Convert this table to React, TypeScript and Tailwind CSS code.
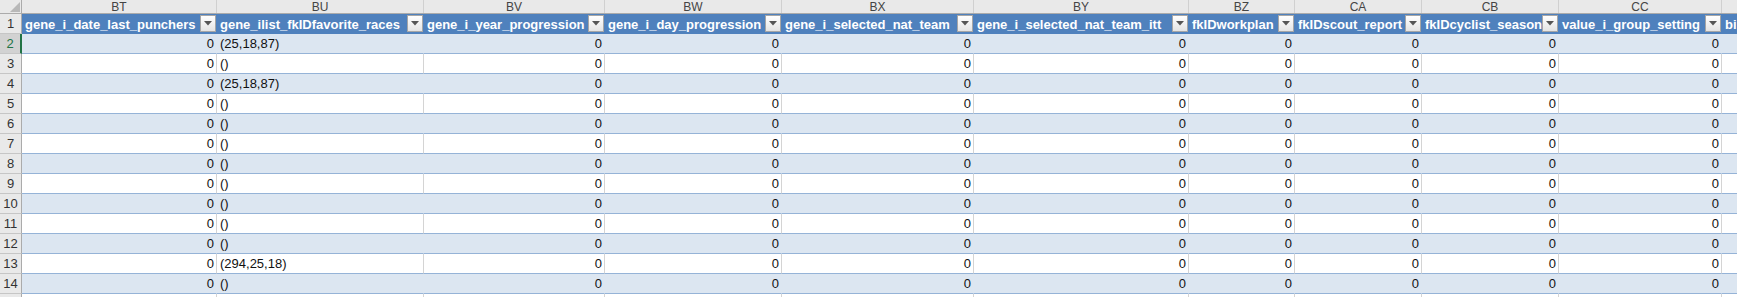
import React from "react";

type Col = { letter: string; w: string; name: string; text?: boolean };

const cols: Col[] = [
  { letter: "BT", w: "w-[195px]", name: "gene_i_date_last_punchers" },
  { letter: "BU", w: "w-[207px]", name: "gene_ilist_fkIDfavorite_races", text: true },
  { letter: "BV", w: "w-[181px]", name: "gene_i_year_progression" },
  { letter: "BW", w: "w-[177px]", name: "gene_i_day_progression" },
  { letter: "BX", w: "w-[192px]", name: "gene_i_selected_nat_team" },
  { letter: "BY", w: "w-[215px]", name: "gene_i_selected_nat_team_itt" },
  { letter: "BZ", w: "w-[106px]", name: "fkIDworkplan" },
  { letter: "CA", w: "w-[127px]", name: "fkIDscout_report" },
  { letter: "CB", w: "w-[137px]", name: "fkIDcyclist_season" },
  { letter: "CC", w: "w-[163px]", name: "value_i_group_setting" },
  { letter: "", w: "w-[140px]", name: "bi" },
];

const races: Record<number, string> = {
  2: "(25,18,87)",
  4: "(25,18,87)",
  13: "(294,25,18)",
};

const rows = Array.from({ length: 14 }, (_, i) => i + 2);

function FilterButton() {
  return (
    <div className="mr-[1px] mt-[1px] flex h-[17px] w-[16px] shrink-0 items-center justify-center border border-[#a6a6a6] bg-gradient-to-b from-[#ffffff] to-[#e4e4e4]">
      <svg width="8" height="5" viewBox="0 0 8 5">
        <polygon points="0,0 8,0 4,4.5" fill="#555555" />
      </svg>
    </div>
  );
}

export default function App() {
  return (
    <div
      className="h-[297px] w-[1737px] overflow-hidden bg-white"
      style={{ fontFamily: '"Liberation Sans", Arial, sans-serif' }}
    >
      <div className="w-max">
        {/* column letters */}
        <div className="flex h-[14px] border-b border-[#ababab] bg-[#e9e9e9]">
          <div className="relative h-full w-[22px] shrink-0 border-r border-[#ababab]">
            <svg className="absolute bottom-[1px] right-[1px]" width="10" height="10" viewBox="0 0 10 10">
              <polygon points="10,0 10,10 0,10" fill="#b8b8b8" />
            </svg>
          </div>
          {cols.map((c, i) => (
            <div
              key={i}
              className={`${c.w} flex h-full shrink-0 items-center justify-center border-r border-[#d0d0d0] text-[12px] leading-none text-[#444444]`}
            >
              {c.letter}
            </div>
          ))}
        </div>

        {/* header row 1 */}
        <div className="flex h-[20px]">
          <div className="flex h-full w-[22px] shrink-0 items-end justify-center border-b border-r border-[#c6c6c6] border-r-[#ababab] bg-[#e9e9e9] pb-[2px] text-[13px] leading-[15px] text-[#333333]">
            1
          </div>
          {cols.map((c, i) => (
            <div
              key={i}
              className={`${c.w} flex h-full shrink-0 items-start overflow-hidden bg-[#4f81bd]`}
            >
              <div className="min-w-0 flex-1 overflow-hidden whitespace-nowrap pl-[3px] pt-[2px] text-[13px] font-bold leading-[17px] text-white">
                {c.name}
              </div>
              {i < 10 && <FilterButton />}
            </div>
          ))}
        </div>

        {/* data rows */}
        {rows.map((r) => {
          const band = r % 2 === 0;
          const selected = r === 2;
          return (
            <div key={r} className="flex h-[20px]">
              <div
                className={`flex h-full w-[22px] shrink-0 items-end justify-center border-b border-b-[#c6c6c6] pb-[2px] text-[13px] leading-[15px] ${
                  selected
                    ? "border-r-2 border-r-[#217346] bg-[#d2d2d2] text-[#217346]"
                    : "border-r border-r-[#ababab] bg-[#e9e9e9] text-[#333333]"
                }`}
              >
                {r}
              </div>
              {cols.map((c, ci) => (
                <div
                  key={ci}
                  className={`${c.w} flex h-full shrink-0 items-end overflow-hidden whitespace-nowrap border-b border-r border-b-[#95b3d7] pb-[2px] text-[13px] leading-[15px] text-[#111111] ${
                    band ? "border-r-[#dce6f1] bg-[#dce6f1]" : "border-r-[#d4d4d4] bg-white"
                  } ${c.text ? "justify-start pl-[3px]" : "justify-end pr-[2px]"}`}
                >
                  {ci === 10 ? "" : c.text ? races[r] ?? "()" : "0"}
                </div>
              ))}
            </div>
          );
        })}

        {/* partial row 15 */}
        <div className="flex h-[20px]">
          <div className="h-full w-[22px] shrink-0 border-r border-[#ababab] bg-[#e9e9e9]" />
          {cols.map((c, i) => (
            <div key={i} className={`${c.w} h-full shrink-0 border-r border-[#d4d4d4] bg-white`} />
          ))}
        </div>
      </div>
    </div>
  );
}
